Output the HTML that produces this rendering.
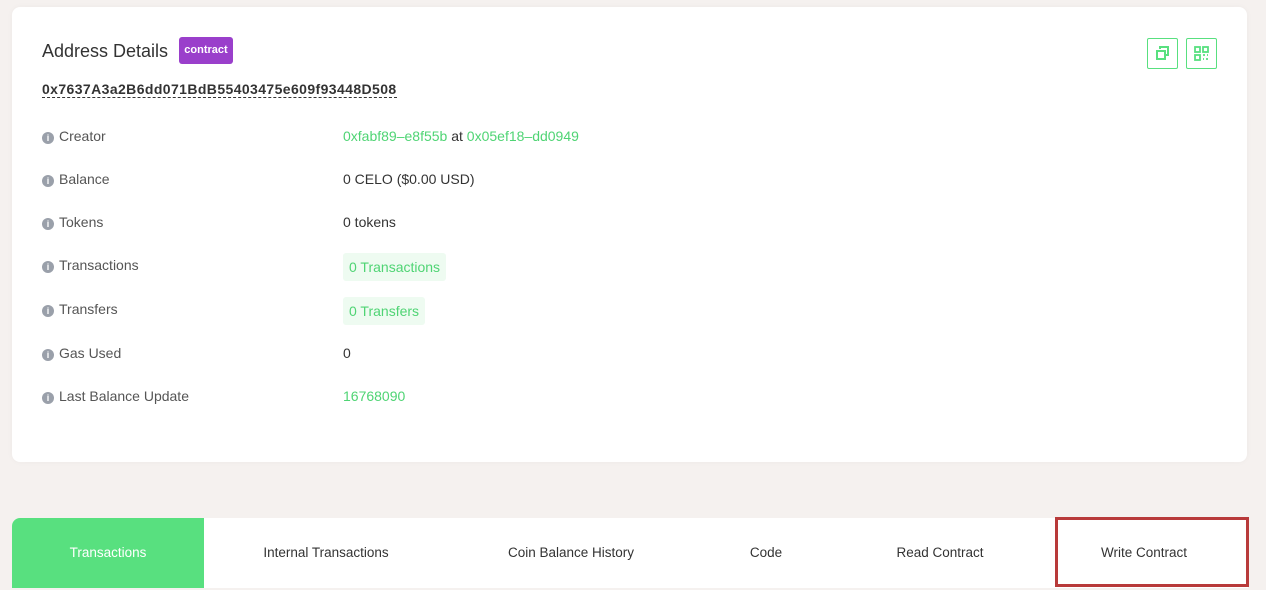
<!DOCTYPE html>
<html><head><style>
body{margin:0;width:1266px;height:590px;background:#f5f1ef;font-family:"Liberation Sans",sans-serif;position:relative;overflow:hidden;color:#333}
.card{position:absolute;left:12px;top:7px;width:1235px;height:455px;background:#fff;border-radius:8px;box-shadow:0 0 6px rgba(0,0,0,.04)}
h1{position:absolute;left:30px;top:34px;margin:0;font-weight:normal;font-size:18px;color:#333}
.badge{position:absolute;left:167px;top:30px;width:54px;height:27px;background:#9a3fcb;color:#fff;font-size:11px;font-weight:bold;border-radius:3px;line-height:27px;text-align:center}
.addr{position:absolute;left:30px;top:74px;font-size:14px;font-weight:bold;color:#333;border-bottom:1px dashed #333;line-height:16px;letter-spacing:.4px}
.btn{position:absolute;top:31px;width:31px;height:31px;border:1px solid #58e07f;border-radius:2px;box-sizing:border-box}
.row{position:absolute;left:30px;font-size:14px;color:#333;height:20px;line-height:20px}
.row .l{color:#555;display:inline-block}
.i{display:inline-block;width:12px;height:12px;border-radius:50%;background:#9aa0aa;color:#fff;font-size:9px;line-height:12px;text-align:center;font-weight:bold;margin-right:5px;vertical-align:-1px;position:relative;top:-1px}
.v{position:absolute;left:301px;top:0;white-space:nowrap}
.g{color:#4fd474}
.pill{background:#eefbf1;color:#4fd474;padding:6px 6px;border-radius:3px}
.tabs{position:absolute;left:12px;top:518px;width:1236px;height:70px;background:#fff;border-radius:8px 0 0 0;overflow:hidden}
.tab{position:absolute;top:0;height:70px;line-height:70px;font-size:13.5px;color:#333;text-align:center}
.red{position:absolute;left:1055px;top:517px;width:188px;height:64px;border:3px solid #b83a3a}
</style></head><body>
<div class="card">
<h1>Address Details</h1>
<div class="badge">contract</div>
<div class="addr">0x7637A3a2B6dd071BdB55403475e609f93448D508</div>
<div class="btn" style="left:1135px"><svg width="29" height="29" viewBox="0 0 29 29"><rect x="9" y="12" width="8" height="8" fill="none" stroke="#58e07f" stroke-width="2"/><path d="M12 10V8h8v8h-2" fill="none" stroke="#58e07f" stroke-width="2"/></svg></div>
<div class="btn" style="left:1174px"><svg width="29" height="29" viewBox="0 0 29 29" fill="none" stroke="#58e07f" stroke-width="1.8"><rect x="8" y="8" width="5" height="5"/><rect x="16" y="8" width="5" height="5"/><rect x="8" y="16" width="5" height="5"/><path d="M16 16h2M20 16h1M16 20h1M19 20h2"/></svg></div>
<div class="row" style="top:119px"><span class="i">i</span><span class="l">Creator</span><span class="v"><span class="g">0xfabf89–e8f55b</span> at <span class="g">0x05ef18–dd0949</span></span></div>
<div class="row" style="top:162px"><span class="i">i</span><span class="l">Balance</span><span class="v">0 CELO ($0.00 USD)</span></div>
<div class="row" style="top:205px"><span class="i">i</span><span class="l">Tokens</span><span class="v">0 tokens</span></div>
<div class="row" style="top:248px"><span class="i">i</span><span class="l">Transactions</span><span class="v" style="top:2px"><span class="pill">0 Transactions</span></span></div>
<div class="row" style="top:292px"><span class="i">i</span><span class="l">Transfers</span><span class="v" style="top:2px"><span class="pill">0 Transfers</span></span></div>
<div class="row" style="top:336px"><span class="i">i</span><span class="l">Gas Used</span><span class="v">0</span></div>
<div class="row" style="top:379px"><span class="i">i</span><span class="l">Last Balance Update</span><span class="v g">16768090</span></div>
</div>
<div class="tabs">
<div class="tab" style="left:0;width:192px;background:#58e07f;color:#fff">Transactions</div>
<div class="tab" style="left:214px;width:200px">Internal Transactions</div>
<div class="tab" style="left:459px;width:200px">Coin Balance History</div>
<div class="tab" style="left:704px;width:100px">Code</div>
<div class="tab" style="left:868px;width:120px">Read Contract</div>
<div class="tab" style="left:1062px;width:140px">Write Contract</div>
</div>
<div class="red"></div>
</body></html>
